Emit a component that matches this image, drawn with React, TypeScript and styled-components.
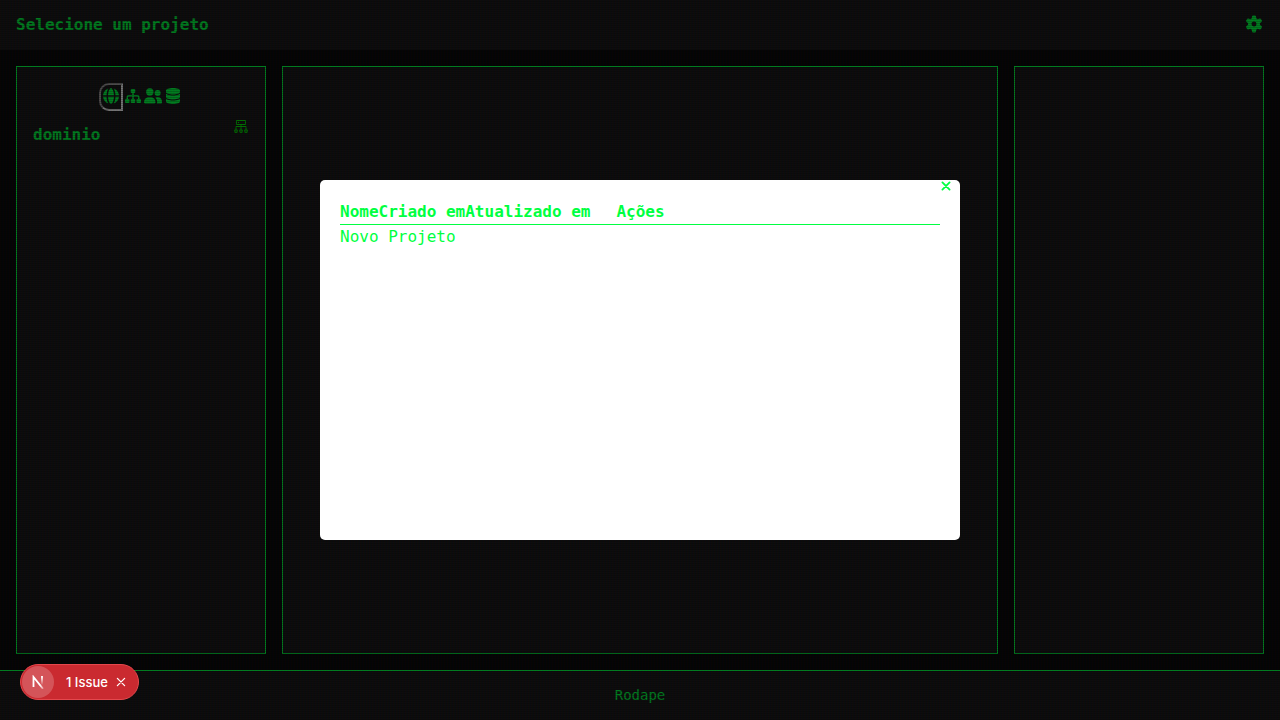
import React from 'react';
import styled, { createGlobalStyle } from 'styled-components';
import { FaDatabase } from 'react-icons/fa6';

const GREEN = '#00ff41';

const Global = createGlobalStyle`
  *, *::before, *::after { box-sizing: border-box; }
  body {
    margin: 0;
    background: #0a0a0a;
    color: ${GREEN};
    font: 16px/24px 'DejaVu Sans Mono', monospace;
  }
  button, h1, h2 { margin: 0; padding: 0; font: inherit; color: inherit; }
  button { background: none; border: 0; cursor: pointer; }
  svg { display: block; }
`;

const Page = styled.div`
  display: flex;
  flex-direction: column;
  min-height: 100vh;
`;

const Header = styled.header`
  display: flex;
  align-items: center;
  justify-content: space-between;
  height: 50px;
  padding: 0 16px;
  background: #1a1a1a;
`;

const Title = styled.h1`
  && { font-weight: 700; }
`;

const Main = styled.main`
  flex: 1;
  display: grid;
  grid-template-columns: 250px 1fr 250px;
  gap: 16px;
  padding: 16px;
`;

const Panel = styled.section`
  padding: 16px;
  border: 1px solid ${GREEN};
  background: #1a1a1a;
`;

const Tabs = styled.nav`
  display: flex;
  justify-content: center;
  align-items: center;
  height: 28px;
`;

const IconButton = styled.button<{ $active?: boolean }>`
  && {
    display: flex;
    justify-content: center;
    box-sizing: content-box;
    width: 20px;
    height: 24px;
    border: ${p => (p.$active ? '2px inset #ededed' : '0')};
    border-radius: ${p => (p.$active ? '10px 0 0 10px' : '0')};
  }
  svg {
    margin-top: 3px;
    height: 16px;
    overflow: visible;
  }
`;

const GroupHeader = styled.div`
  display: flex;
  align-items: flex-start;
  justify-content: space-between;
  margin-top: 8px;
`;

const GroupTitle = styled.h2`
  && { padding: 4px 0; font-weight: 700; }
`;

const ClusterButton = styled.button`
  && { color: #00e000; }
`;

const Footer = styled.footer`
  height: 50px;
  padding: 14px 16px;
  border-top: 1px solid ${GREEN};
  background: #1a1a1a;
  font-size: 14px;
  line-height: 20px;
  text-align: center;
`;

const Scanlines = styled.div`
  position: fixed;
  inset: 0;
  pointer-events: none;
  background:
    linear-gradient(rgba(18, 16, 16, 0) 50%, rgba(0, 0, 0, 0.2) 50%) 0 0 / 100% 2px,
    linear-gradient(90deg, rgba(255, 0, 0, 0.06), rgba(0, 255, 0, 0.02), rgba(0, 0, 255, 0.06)) 0 0 / 3px 100%;
`;

const Overlay = styled.div`
  position: fixed;
  inset: 0;
  display: flex;
  align-items: center;
  justify-content: center;
  background: rgba(0, 0, 0, 0.5);
`;

const Dialog = styled.div`
  position: relative;
  width: 50%;
  height: 50vh;
  padding: 20px;
  border-radius: 5px;
  background: #fff;
`;

const CloseButton = styled.button`
  position: absolute;
  top: 0;
  right: 8px;
`;

const Projects = styled.table`
  width: 100%;
  border-collapse: collapse;
  th, td { padding: 0; text-align: left; white-space: nowrap; }
  th { width: 1px; }
  th:last-child { width: auto; padding-left: 26px; }
  thead { border-bottom: 1px solid ${GREEN}; }
`;

const Toast = styled.div`
  position: fixed;
  left: 20px;
  bottom: 20px;
  display: flex;
  align-items: center;
  height: 36px;
  padding: 0 11px 0 1px;
  border: 1px solid #e5484d;
  border-radius: 18px;
  background: #ca2a30;
  color: #fff;
  font: 500 13px/16px Inter, sans-serif;
`;

const LogoButton = styled.button`
  && {
    display: grid;
    place-items: center;
    width: 32px;
    height: 32px;
    margin-right: 12px;
    border-radius: 50%;
    background: rgba(255, 255, 255, 0.2);
  }
`;

const DismissButton = styled.button`
  && { margin-left: 7px; }
`;

const GearIcon = () => (
  <svg width="16" height="16" viewBox="0 0 512 512" fill="currentColor">
    <path d="M195.1 9.5C198.1-5.3 211.2-16 226.4-16l59.8 0c15.2 0 28.3 10.7 31.3 25.5L332 79.5c14.1 6 27.3 13.7 39.3 22.8l67.8-22.5c14.4-4.8 30.2 1.2 37.8 14.4l29.9 51.8c7.6 13.2 4.9 29.8-6.5 39.9L447 233.3c.9 7.4 1.3 15 1.3 22.7s-.5 15.3-1.3 22.7l53.4 47.5c11.4 10.1 14 26.8 6.5 39.9l-29.9 51.8c-7.6 13.1-23.4 19.2-37.8 14.4l-67.8-22.5c-12.1 9.1-25.3 16.7-39.3 22.8l-14.4 69.9c-3.1 14.9-16.2 25.5-31.3 25.5l-59.8 0c-15.2 0-28.3-10.7-31.3-25.5l-14.4-69.9c-14.1-6-27.2-13.7-39.3-22.8L73.5 432.3c-14.4 4.8-30.2-1.2-37.8-14.4L5.8 366.1c-7.6-13.2-4.9-29.8 6.5-39.9l53.4-47.5c-.9-7.4-1.3-15-1.3-22.7s.5-15.3 1.3-22.7L12.3 185.8c-11.4-10.1-14-26.8-6.5-39.9L35.7 94.1c7.6-13.2 23.4-19.2 37.8-14.4l67.8 22.5c12.1-9.1 25.3-16.7 39.3-22.8L195.1 9.5zM256.3 336a80 80 0 1 0 -.6-160 80 80 0 1 0 .6 160z" />
  </svg>
);

const GlobeIcon = () => (
  <svg width="16" height="16" viewBox="0 0 512 512" fill="currentColor">
    <path d="M351.9 280l-190.9 0c2.9 64.5 17.2 123.9 37.5 167.4 11.4 24.5 23.7 41.8 35.1 52.4 11.2 10.5 18.9 12.2 22.9 12.2s11.7-1.7 22.9-12.2c11.4-10.6 23.7-28 35.1-52.4 20.3-43.5 34.6-102.9 37.5-167.4zM160.9 232l190.9 0C349 167.5 334.7 108.1 314.4 64.6 303 40.2 290.7 22.8 279.3 12.2 268.1 1.7 260.4 0 256.4 0s-11.7 1.7-22.9 12.2C222.1 22.8 209.8 40.2 198.4 64.6 178.1 108.1 163.8 167.5 160.9 232zm-48 0C116.4 146.4 138.5 66.9 170.8 14.7 78.7 47.3 10.9 131.2 1.5 232l111.4 0zM1.5 280c9.4 100.8 77.2 184.7 169.3 217.3-32.3-52.2-54.4-131.7-57.9-217.3L1.5 280zm398.4 0c-3.5 85.6-25.6 165.1-57.9 217.3 92.1-32.7 159.9-116.5 169.3-217.3l-111.4 0zm111.4-48C501.9 131.2 434.1 47.3 342 14.7 374.3 66.9 396.4 146.4 399.9 232l111.4 0z" />
  </svg>
);

const SitemapIcon = () => (
  <svg width="16" height="16" viewBox="0 0 512 512" fill="currentColor">
    <rect x="184" y="32" width="144" height="128" rx="32" />
    <rect x="0" y="352" width="144" height="128" rx="32" />
    <rect x="184" y="352" width="144" height="128" rx="32" />
    <rect x="368" y="352" width="144" height="128" rx="32" />
    <path d="M256 140v230M72 370v-74q0-48 48-48h272q48 0 48 48v74" fill="none" stroke="currentColor" strokeWidth="48" />
  </svg>
);

const UsersIcon = () => (
  <svg width="18" height="16" viewBox="0 0 18 16" fill="currentColor">
    <circle cx="5.8" cy="4" r="3.7" />
    <circle cx="13.6" cy="5" r="3" />
    <path d="M0 14.3C0 11.2 2.3 9.3 5 9.3h1.5c2.7 0 5 1.9 5 5 0 .7-.5 1.2-1.2 1.2H1.2C.5 15.5 0 15 0 14.3z" />
    <path d="M12.9 15.5c.2-.4.3-.8.3-1.2 0-1.9-.7-3.5-1.9-4.700.6-.3 1.4-.5 2.2-.5 2.5 0 4.5 2 4.500 4.500v.8c0 .6-.5 1.100-1.100 1.100z" />
  </svg>
);

const ClusterIcon = () => (
  <svg width="16" height="16" viewBox="0 0 16 16" fill="none" stroke="currentColor">
    <path d="M3.500 1.500h9v4h-9zM8 5.500v5M3 10.500v-3h10v3" />
    <path d="M5 3.500h1" />
    <circle cx="3" cy="12" r="1.300" strokeWidth="1.200" />
    <circle cx="8" cy="12" r="1.300" strokeWidth="1.200" />
    <circle cx="13" cy="12" r="1.300" strokeWidth="1.200" />
  </svg>
);

const LogoIcon = () => (
  <svg width="14" height="14" viewBox="0 0 14 14" fill="none" strokeWidth="1.800">
    <defs>
      <linearGradient id="stem" x1="0" y1="2" x2="0" y2="10" gradientUnits="userSpaceOnUse">
        <stop stopColor="#fff" />
        <stop offset="1" stopColor="#fff" stopOpacity="0" />
      </linearGradient>
      <linearGradient id="slope" x1="9" y1="10" x2="13" y2="14" gradientUnits="userSpaceOnUse">
        <stop stopColor="#fff" />
        <stop offset="1" stopColor="#fff" stopOpacity="0.3" />
      </linearGradient>
    </defs>
    <path d="M2.500 12V2L12 13.800" stroke="url(#slope)" />
    <path d="M11 1v9" stroke="url(#stem)" />
  </svg>
);

const CrossIcon = ({ weight }: { weight: number }) => (
  <svg width="12" height="12" viewBox="0 0 12 12" fill="none" stroke="currentColor" strokeLinecap="round" strokeWidth={weight}>
    <path d="M2.400 2.400l7.200 7.200M9.600 2.400l-7.200 7.200" />
  </svg>
);

export default function App() {
  return (
    <>
      <Global />
      <Page>
        <Header>
          <Title>Selecione um projeto</Title>
          <IconButton aria-label="Configurações"><GearIcon /></IconButton>
        </Header>
        <Main>
          <Panel>
            <Tabs>
              <IconButton $active aria-label="Domínio"><GlobeIcon /></IconButton>
              <IconButton aria-label="Estrutura"><SitemapIcon /></IconButton>
              <IconButton aria-label="Usuários"><UsersIcon /></IconButton>
              <IconButton aria-label="Banco de dados"><FaDatabase size={16} /></IconButton>
            </Tabs>
            <GroupHeader>
              <GroupTitle>dominio</GroupTitle>
              <ClusterButton aria-label="Adicionar"><ClusterIcon /></ClusterButton>
            </GroupHeader>
          </Panel>
          <Panel />
          <Panel />
        </Main>
        <Footer>Rodape</Footer>
      </Page>
      <Scanlines />
      <Overlay>
        <Dialog role="dialog" aria-label="Projetos">
          <CloseButton aria-label="Fechar"><CrossIcon weight={1.8} /></CloseButton>
          <Projects>
            <thead>
              <tr><th>Nome</th><th>Criado em</th><th>Atualizado em</th><th>Ações</th></tr>
            </thead>
            <tbody>
              <tr><td colSpan={4}><button>Novo Projeto</button></td></tr>
            </tbody>
          </Projects>
        </Dialog>
      </Overlay>
      <Toast>
        <LogoButton aria-label="Next.js"><LogoIcon /></LogoButton>
        <button>1 Issue</button>
        <DismissButton aria-label="Dispensar"><CrossIcon weight={1.3} /></DismissButton>
      </Toast>
    </>
  );
}
